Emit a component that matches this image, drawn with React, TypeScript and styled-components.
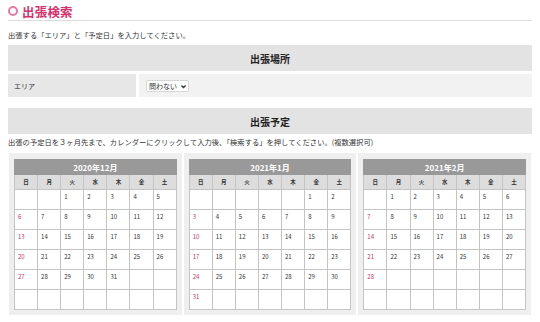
import React from "react";
import styled, { createGlobalStyle } from "styled-components";

const GlobalStyle = createGlobalStyle`
	html, body {
		margin: 0;
		padding: 0;
		background: #ffffff;
	}
	body {
		font-family: "Noto Sans CJK JP", "Noto Sans", sans-serif;
		color: #333333;
	}
`;

const WEEK = ["日", "月", "火", "水", "木", "金", "土"];

const MONTHS = [
	{ label: "2020年12月", start: 2, days: 31 },
	{ label: "2021年1月", start: 5, days: 31 },
	{ label: "2021年2月", start: 1, days: 28 },
];

function buildCells(start: number, days: number) {
	const cells: (number | null)[] = [];
	for (let i = 0; i < start; i++) cells.push(null);
	for (let d = 1; d <= days; d++) cells.push(d);
	while (cells.length < 42) cells.push(null);
	return cells;
}

export default function App() {
	return (
		<Page>
			<GlobalStyle />
			<Title>
				<Ring />
				出張検索
			</Title>
			<Lead>出張する「エリア」と「予定日」を入力してください。</Lead>

			<SectionHead>出張場所</SectionHead>
			<FieldRow>
				<FieldLabel>エリア</FieldLabel>
				<FieldValue>
					<SelectWrap>
						<AreaSelect defaultValue="none">
							<option value="none">問わない</option>
						</AreaSelect>
						<Chevron viewBox="0 0 10 10">
							<path d="M2 3.5 L5 6.5 L8 3.5" fill="none" stroke="#333" strokeWidth="1.8" />
						</Chevron>
					</SelectWrap>
				</FieldValue>
			</FieldRow>

			<SectionHead $spaced>出張予定</SectionHead>
			<Lead $tight>
				出張の予定日を３ヶ月先まで、カレンダーにクリックして入力後、「検索する」を押してください。(複数選択可)
			</Lead>

			<Calendars>
				{MONTHS.map((m) => (
					<CalendarBox key={m.label}>
						<MonthBar>{m.label}</MonthBar>
						<Grid>
							{WEEK.map((w) => (
								<WeekCell key={w}>{w}</WeekCell>
							))}
							{buildCells(m.start, m.days).map((d, i) => (
								<DayCell key={i} $sunday={i % 7 === 0}>
									{d ?? ""}
								</DayCell>
							))}
						</Grid>
					</CalendarBox>
				))}
			</Calendars>
		</Page>
	);
}

const Page = styled.div`
	padding: 3px 8px 0;
	width: 524px;
`;

const Title = styled.div`
	display: flex;
	align-items: center;
	gap: 3px;
	height: 16px;
	font-size: 12.5px;
	font-weight: 700;
	color: #d3306c;
	border-bottom: 1px solid #dddddd;
	padding-bottom: 1px;
	letter-spacing: 0.2px;
`;

const Ring = styled.span`
	display: inline-block;
	width: 6px;
	height: 6px;
	border: 2px solid #e47aa0;
	border-radius: 50%;
	margin-right: 1px;
`;

const Lead = styled.div<{ $tight?: boolean }>`
	font-size: 7.3px;
	line-height: 10px;
	color: #333333;
	margin: ${(p) => (p.$tight ? "3px 0 6px" : "9px 0 5px")};
	white-space: nowrap;
`;

const SectionHead = styled.div<{ $spaced?: boolean }>`
	height: 26px;
	background: #e3e3e3;
	display: flex;
	align-items: center;
	justify-content: center;
	font-size: 10px;
	font-weight: 700;
	color: #222222;
	margin-top: ${(p) => (p.$spaced ? "11px" : "0")};
`;

const FieldRow = styled.div`
	display: flex;
	gap: 3px;
	margin-top: 3px;
	height: 23px;
`;

const FieldLabel = styled.div`
	width: 128px;
	background: #e7e7e7;
	font-size: 7px;
	display: flex;
	align-items: center;
	padding-left: 6px;
	box-sizing: border-box;
	color: #333333;
`;

const FieldValue = styled.div`
	flex: 1;
	background: #f2f2f2;
	display: flex;
	align-items: center;
	padding-left: 7px;
`;

const SelectWrap = styled.div`
	position: relative;
	display: inline-flex;
	align-items: center;
`;

const AreaSelect = styled.select`
	appearance: none;
	font-family: "Noto Sans CJK JP", sans-serif;
	font-size: 7px;
	color: #333333;
	background: #ffffff;
	border: 1px solid #d6d6d6;
	border-radius: 2px;
	padding: 1px 11px 1px 2px;
	height: 12px;
	line-height: 8px;
`;

const Chevron = styled.svg`
	position: absolute;
	right: 2px;
	top: 3px;
	width: 7px;
	height: 7px;
	pointer-events: none;
`;

const Calendars = styled.div`
	display: grid;
	grid-template-columns: repeat(3, 1fr);
	gap: 0;
`;

const CalendarBox = styled.div`
	background: #efefef;
	padding: 6px 5px 5px;
	margin: 0 1px;
`;

const MonthBar = styled.div`
	height: 16px;
	background: #999999;
	color: #ffffff;
	font-size: 8px;
	font-weight: 700;
	display: flex;
	align-items: center;
	justify-content: center;
`;

const Grid = styled.div`
	display: grid;
	grid-template-columns: repeat(7, 1fr);
	border-left: 1px solid #c4c4c4;
`;

const WeekCell = styled.div`
	height: 15px;
	box-sizing: border-box;
	background: #dddddd;
	border-right: 1px solid #c4c4c4;
	border-bottom: 1px solid #c4c4c4;
	font-size: 5.5px;
	font-weight: 700;
	color: #333333;
	display: flex;
	align-items: center;
	justify-content: center;
`;

const DayCell = styled.div<{ $sunday: boolean }>`
	height: 20px;
	background: #ffffff;
	border-right: 1px solid #c4c4c4;
	border-bottom: 1px solid #c4c4c4;
	font-size: 6px;
	line-height: 8px;
	padding: 3px 0 0 3px;
	box-sizing: border-box;
	color: ${(p) => (p.$sunday ? "#cc2f68" : "#333333")};
`;
